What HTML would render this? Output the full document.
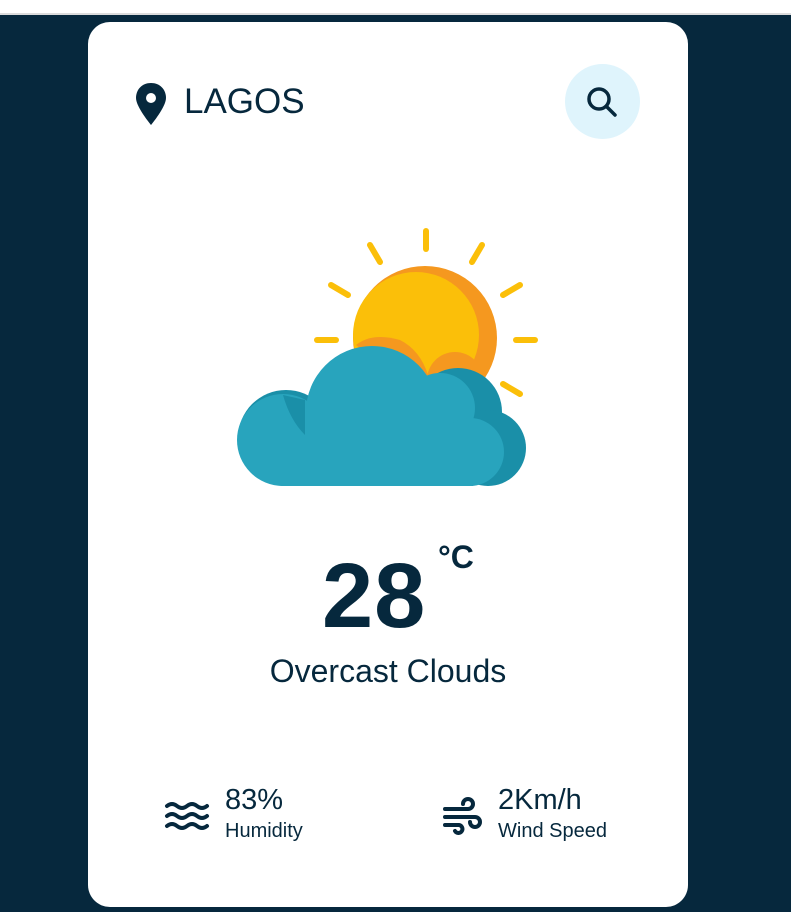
<!DOCTYPE html>
<html><head><style>
html,body{margin:0;padding:0;}
body{width:791px;height:912px;background:#06283D;position:relative;overflow:hidden;font-family:"Liberation Sans",Arial,sans-serif;}
.top{position:absolute;left:0;top:0;width:791px;height:13px;background:#fff;border-bottom:2px solid #dcdcdc;}
.card{position:absolute;left:88px;top:22px;width:600px;height:885px;background:#fff;border-radius:22px;}
.t{position:absolute;color:#06283D;}
</style></head><body>
<div class="top"></div>
<div class="card">
 <svg class="t" style="left:46px;top:60px" width="34" height="44" viewBox="0 0 34 44">
  <path d="M17 1C8 1 2 7.5 2 16c0 9 15 27 15 27s15-18 15-27C32 7.5 26 1 17 1z" fill="#06283D"/>
  <circle cx="17" cy="16" r="5" fill="#fff"/>
 </svg>
 <div class="t" style="left:96px;top:60px;font-size:35px;line-height:40px;">LAGOS</div>
 <div style="position:absolute;left:477px;top:42px;width:75px;height:75px;border-radius:50%;background:#dff4fc;"></div>
 <svg class="t" style="left:496px;top:62px" width="36" height="36" viewBox="0 0 36 36">
  <circle cx="15" cy="15" r="10" fill="none" stroke="#06283D" stroke-width="3.5"/>
  <line x1="22.5" y1="22.5" x2="31" y2="31" stroke="#06283D" stroke-width="3.5" stroke-linecap="round"/>
 </svg>
 <svg style="position:absolute;left:0;top:0" width="600" height="480" viewBox="88 22 600 480">
  <g stroke="#fbbf09" stroke-width="6" stroke-linecap="round">
   <line x1="426" y1="231" x2="426" y2="249"/>
   <line x1="370" y1="245" x2="380" y2="262"/>
   <line x1="482" y1="245" x2="472" y2="262"/>
   <line x1="331" y1="285" x2="348" y2="295"/>
   <line x1="520" y1="285" x2="503" y2="295"/>
   <line x1="317" y1="340" x2="336" y2="340"/>
   <line x1="516" y1="340" x2="535" y2="340"/>
   <line x1="503" y1="384" x2="520" y2="394"/>
  </g>
  <circle cx="425" cy="338" r="72" fill="#f5981f"/>
  <circle cx="416" cy="335" r="63" fill="#fbbf09"/>
  <path d="M356 345 Q372 332 400 340 Q420 350 428 375 L400 380 Z" fill="#f5981f"/>
  <circle cx="455" cy="380" r="28" fill="#f5981f"/>
  <g fill="#1a8fa8">
   <circle cx="286" cy="438" r="48"/>
   <circle cx="458" cy="412" r="44"/>
   <circle cx="488" cy="448" r="38"/>
  </g>
  <g fill="#28a4bd">
   <circle cx="283" cy="440" r="46"/>
   <circle cx="372" cy="412" r="66"/>
   <circle cx="440" cy="408" r="35"/>
   <circle cx="470" cy="452" r="34"/>
   <rect x="283" y="430" width="190" height="56"/>
  </g>
  <path d="M283 395 Q290 420 305 435 L305 400 Z" fill="#1a8fa8"/>
  <rect x="230" y="486" width="310" height="20" fill="#fff"/>
 </svg>
 <div class="t" style="left:234px;top:524px;font-size:92px;font-weight:bold;line-height:100px;letter-spacing:1px;">28</div>
 <div class="t" style="left:350px;top:517px;font-size:32px;font-weight:bold;">°C</div>
 <div class="t" style="left:0;width:600px;text-align:center;top:630px;font-size:32px;line-height:38px;">Overcast Clouds</div>
 <svg class="t" style="left:76px;top:776px" width="46" height="36" viewBox="0 0 46 36">
  <g fill="none" stroke="#06283D" stroke-width="4" stroke-linecap="round">
   <path d="M3 8q5-4 10 0t10 0t10 0t10 0"/>
   <path d="M3 18q5-4 10 0t10 0t10 0t10 0"/>
   <path d="M3 28q5-4 10 0t10 0t10 0t10 0"/>
  </g>
 </svg>
 <div class="t" style="left:137px;top:760px;font-size:29px;line-height:36px;">83%</div>
 <div class="t" style="left:137px;top:797px;font-size:20px;line-height:24px;">Humidity</div>
 <svg class="t" style="left:354px;top:774px" width="42" height="42" viewBox="0 0 42 42">
  <g fill="none" stroke="#06283D" stroke-width="4" stroke-linecap="round">
   <path d="M3 13h23a5 5 0 1 0-5-5"/>
   <path d="M3 21h30a5 5 0 1 1-5 5"/>
   <path d="M3 29h14a4 4 0 1 1-4 6"/>
  </g>
 </svg>
 <div class="t" style="left:410px;top:760px;font-size:29px;line-height:36px;">2Km/h</div>
 <div class="t" style="left:410px;top:797px;font-size:20px;line-height:24px;">Wind Speed</div>
</div>
</body></html>
